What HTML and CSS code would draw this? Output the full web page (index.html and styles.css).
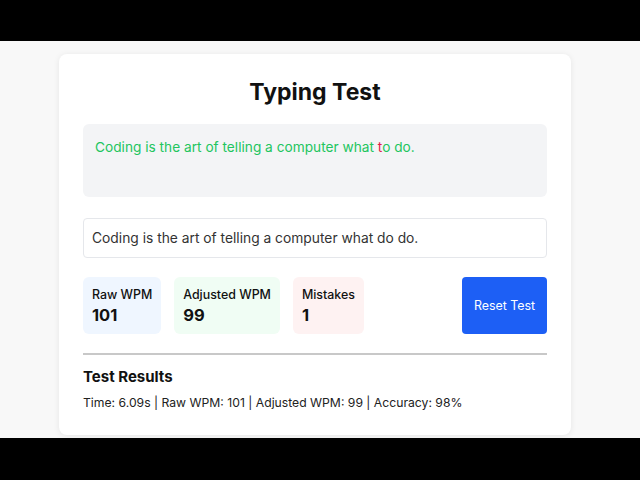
FILE: index.html
```html
<!DOCTYPE html>
<html>
<head>
<meta charset="utf-8">
<link rel="stylesheet" href="styles.css">
</head>
<body>
<div class="bar-top"></div>
<main class="stage">
  <section class="card">
    <h1 class="title">Typing Test</h1>
    <div class="prompt"><span class="ok">Coding is the art of telling a computer what </span><span class="bad">t</span><span class="ok">o do.</span></div>
    <div class="input">Coding is the art of telling a computer what do do.</div>
    <div class="stats">
      <div class="stat blue"><div class="label">Raw WPM</div><div class="value">101</div></div>
      <div class="stat green"><div class="label">Adjusted WPM</div><div class="value">99</div></div>
      <div class="stat red"><div class="label">Mistakes</div><div class="value">1</div></div>
      <button class="reset">Reset Test</button>
    </div>
    <hr class="divider">
    <h2 class="results-title">Test Results</h2>
    <p class="results">Time: 6.09s | Raw WPM: 101 | Adjusted WPM: 99 | Accuracy: 98%</p>
  </section>
</main>
<div class="bar-bottom"></div>
</body>
</html>
```
FILE: styles.css
```css
* { box-sizing: border-box; }
html, body { margin: 0; padding: 0; }
body {
  background: #000;
  font-family: Inter, "Noto Sans", sans-serif;
  width: 640px;
  height: 480px;
  overflow: hidden;
}
.bar-top { height: 41px; background: #000; }
.bar-bottom { height: 42px; background: #000; }
.stage {
  height: 397px;
  background: #f8f8f8;
  padding-top: 13px;
  overflow: hidden;
}
.card {
  width: 512px;
  margin-left: 59px;
  background: #fff;
  border-radius: 8px;
  box-shadow: 0 1px 6px rgba(0,0,0,0.08);
  padding: 22px 24px 24px;
  height: 381px;
}
.title {
  margin: 0 0 16px;
  font-size: 23px;
  line-height: 32px;
  font-weight: 700;
  text-align: center;
  color: #111;
}
.prompt {
  background: #f3f4f6;
  border-radius: 6px;
  height: 73px;
  padding: 12px;
  font-size: 13.7px;
  line-height: 22px;
  color: #22c55e;
}
.bad { color: #e11d48; }
.input {
  margin-top: 21px;
  height: 40px;
  border: 1px solid #e5e7eb;
  border-radius: 4px;
  padding: 0 8px;
  font-size: 13.8px;
  line-height: 38px;
  color: #333;
}
.stats {
  margin-top: 19px;
  display: flex;
  gap: 13px;
  height: 57px;
}
.stat {
  border-radius: 6px;
  padding: 9px 9px;
}
.blue { background: #eff6ff; }
.green { background: #f0fdf4; }
.red { background: #fef2f2; }
.label { font-size: 12.4px; line-height: 18px; font-weight: 500; color: #111; }
.value { font-size: 16.5px; line-height: 22px; font-weight: 700; color: #111; }
.reset {
  margin-left: auto;
  width: 85px;
  background: #1d5ff5;
  color: #fff;
  border: none;
  border-radius: 4px;
  font-family: inherit;
  font-size: 12.4px;
}
.divider {
  margin: 19px 0 0;
  border: none;
  border-top: 2px solid #c8c8c8;
}
.results-title {
  margin: 10px 0 4px;
  font-size: 15px;
  line-height: 24px;
  font-weight: 700;
  color: #111;
}
.results {
  margin: 0;
  font-size: 12.2px;
  line-height: 20px;
  color: #222;
}
```
